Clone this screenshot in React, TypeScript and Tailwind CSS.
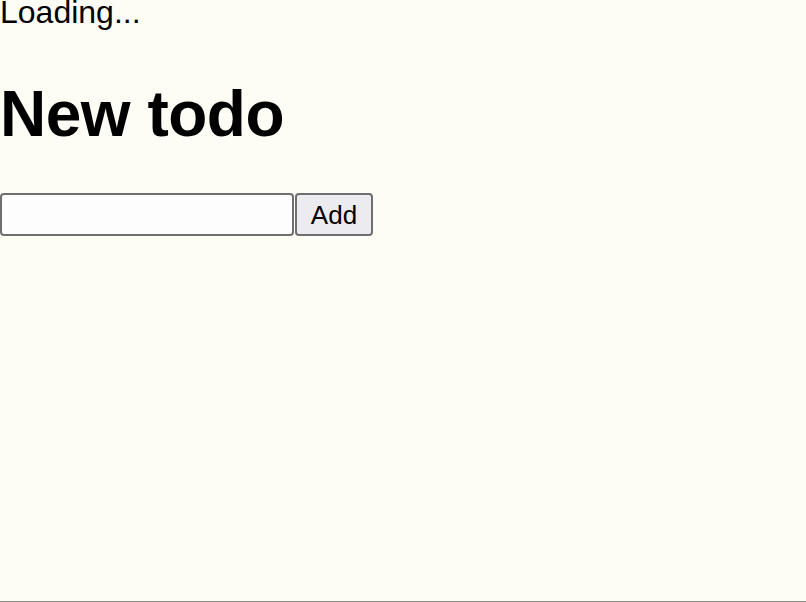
export default function App() {
  return (
    <div className="flex h-[602px] flex-col overflow-hidden bg-[#fdfdf5] font-['Liberation_Sans',Arial,sans-serif] text-black">
      <div className="text-[32px] leading-[24px]">Loading...</div>
      <h1 className="mt-[58px] text-[64px] font-bold leading-[64px] tracking-[-0.5px]">New todo</h1>
      <form className="mt-[47px] flex gap-px" onSubmit={(e) => e.preventDefault()}>
        <input
          type="text"
          className="h-[43px] w-[294px] rounded-[4px] border-2 border-[#6f6f6f] bg-[#fdfdfd] px-1 text-[26px] outline-none"
        />
        <button
          type="submit"
          className="h-[43px] w-[78px] rounded-[4px] border-2 border-[#6f6f6f] bg-[#ececf0] text-[26px] leading-none"
        >
          Add
        </button>
      </form>
      <div className="mt-auto h-px bg-[#8a8a80]" />
    </div>
  );
}
